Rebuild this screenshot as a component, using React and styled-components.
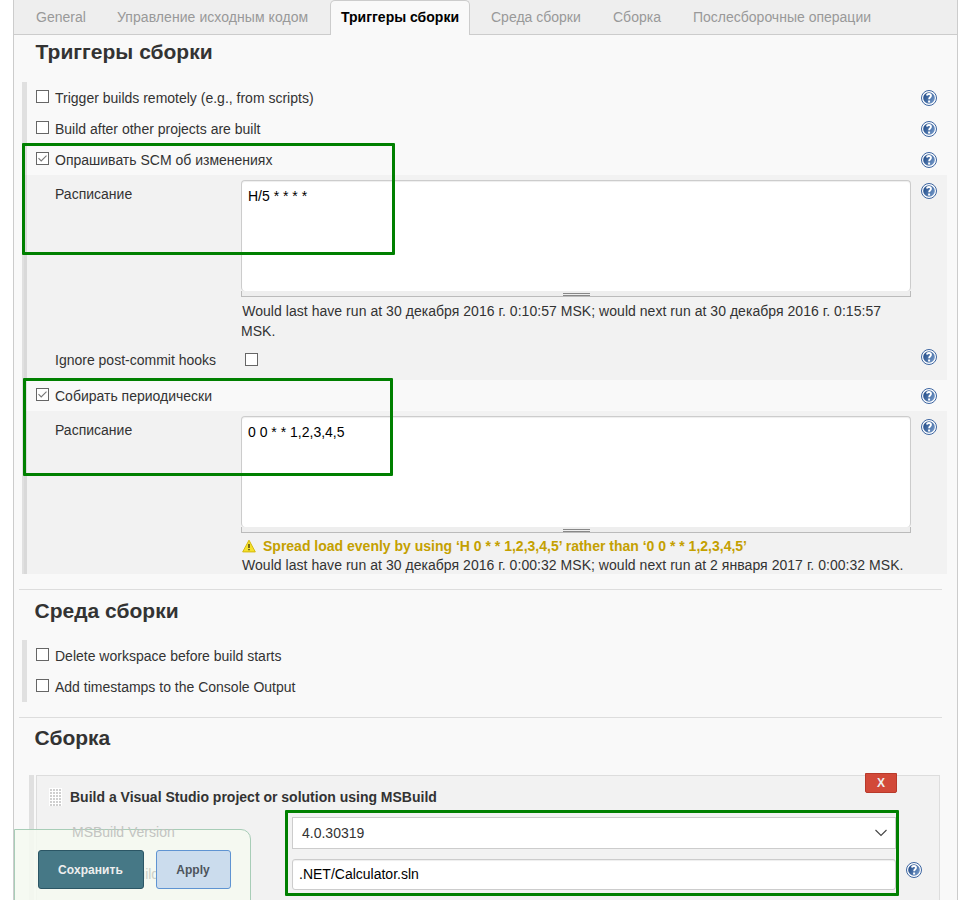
import React from "react";
import styled, { createGlobalStyle } from "styled-components";

const GlobalStyle = createGlobalStyle`
  * { box-sizing: border-box; }
  body {
    margin: 0;
    background: #fff;
    color: #333;
    font: 14px/20px "Liberation Sans", Arial, sans-serif;
    overflow: hidden;
  }
`;

const Page = styled.div`
  position: relative;
  width: 975px;
  height: 900px;
  overflow: hidden;
`;

const Panel = styled.main`
  width: 945px;
  height: 900px;
  margin-left: 13px;
  border: solid #ccc;
  border-width: 0 1px;
  background: #f9f9f9;
`;

const TabBar = styled.nav`
  display: flex;
  height: 35px;
  padding-left: 22px;
  background: #eee;
  border-bottom: 1px solid #ccc;
`;

const Tab = styled.a`
  flex: none;
  width: ${(p) => p.$width}px;
  margin-left: ${(p) => p.$gap || 0}px;
  line-height: 35px;
  color: #999;
  white-space: nowrap;
  letter-spacing: ${(p) => p.$spacing || 0}px;
`;

const ActiveTab = styled(Tab)`
  height: 35px;
  border: 1px solid #ccc;
  border-bottom: 0;
  border-radius: 5px 5px 0 0;
  background: #f9f9f9;
  color: #000;
  font-weight: bold;
  line-height: 33px;
  text-align: center;
`;

const Heading = styled.h2`
  margin: 0;
  height: ${(p) => p.$height}px;
  padding: ${(p) => p.$top}px 0 0 ${(p) => p.$left || 20.6}px;
  font-size: 21px;
  line-height: 24px;
  font-weight: bold;
  color: #333;
`;

const Group = styled.section`
  width: 925px;
  margin-left: 8px;
  border-left: 5px solid #e0e0e0;
`;

const OptionRow = styled.div`
  display: grid;
  grid-template-columns: 19px 1fr 26px;
  height: 31px;
  padding: 6px 0 0 9px;
`;

const Box = styled.span`
  display: block;
  width: 13px;
  height: 13px;
  margin: ${(p) => p.$margin || "2px 0 0"};
  border: 1px solid #666;
  background: #fff;
  svg { display: block; }
`;

const Label = styled.span`
  white-space: nowrap;
  line-height: 20px;
`;

const Details = styled.div`
  display: grid;
  grid-template-columns: 191px 670px 36px;
  grid-auto-rows: min-content;
  height: ${(p) => p.$height}px;
  margin-left: -3px;
  padding: 5px 0 0 23px;
  border-left: 3px solid #d9d9d9;
  background: #f2f2f2;
`;

const DetailLabel = styled(Label)`
  padding: ${(p) => p.$top || 4}px 0 0 5px;
`;

const HelpCell = styled.span`
  padding: ${(p) => p.$top || 0}px 0 0 ${(p) => p.$left || 0}px;
  svg { display: block; }
`;

const TextArea = styled.div`
  height: 111px;
  padding: 5px 6px;
  border: 1px solid #ccc;
  border-bottom: 0;
  border-radius: 4px;
  background: #fff;
  color: #000;
  box-shadow: inset 0 1px 1px rgba(0, 0, 0, 0.07);
`;

const Grip = styled.div`
  display: flex;
  justify-content: center;
  height: 6px;
  padding-top: 2px;
  border: 1px solid #bbb;
  border-top: 0;
  background: #eee;
`;

const GripLines = styled.span`
  width: 27px;
  height: 3px;
  border: solid #888;
  border-width: 1px 0;
`;

const Message = styled.div`
  margin-top: ${(p) => p.$top}px;
  padding-left: ${(p) => p.$left || 0}px;
  letter-spacing: 0.041px;
  line-height: 20px;
`;

const Warning = styled.div`
  display: flex;
  gap: 7px;
  height: 19px;
  margin-top: 3px;
  padding-left: 1px;
  color: #c4a000;
  font-weight: bold;
  white-space: nowrap;
  svg { flex: none; margin-top: 3px; }
`;

const Separator = styled.div`
  width: 923px;
  height: 1px;
  margin: ${(p) => p.$top}px 0 0 5px;
  background: #ddd;
`;

const BuildGroup = styled.section`
  width: 911px;
  margin-left: 15px;
  padding-left: 2px;
  border-left: 5px solid #e0e0e0;
`;

const BuildStep = styled.div`
  position: relative;
  height: 125px;
  border: 1px solid #ddd;
  border-bottom: 0;
  background: #f2f2f2;
`;

const StepTitle = styled.div`
  display: flex;
  gap: 8px;
  height: 41px;
  padding: 11px 0 0 12px;
  font-weight: bold;
  svg { margin-top: 1px; }
`;

const Field = styled.div`
  display: grid;
  grid-template-columns: 220px 604px 26px;
  height: 42px;
  padding-left: 35px;
`;

const FadedLabel = styled(Label)`
  position: relative;
  z-index: 2;
  padding-top: 5px;
  color: ${(p) => p.$color};
`;

const Select = styled.div`
  display: flex;
  justify-content: space-between;
  height: 32px;
  padding: 5px 8px 0 9px;
  border: 1px solid #ccc;
  background: #fff;
  svg { margin-top: 6px; }
`;

const Input = styled.div`
  height: 31px;
  padding: 4px 6px;
  border: 1px solid #ccc;
  border-radius: 3px;
  background: #fff;
  color: #000;
  box-shadow: inset 0 1px 1px rgba(0, 0, 0, 0.07);
`;

const DeleteButton = styled.button`
  position: absolute;
  top: -3px;
  right: 42px;
  width: 32px;
  height: 20px;
  padding: 1px 0 0;
  border: 1px solid #b83a2b;
  border-radius: 0 0 2px 2px;
  background: #d24939;
  color: #eee;
  font: bold 12px/17px "Liberation Sans", Arial, sans-serif;
`;

const Footer = styled.div`
  position: absolute;
  z-index: 1;
  left: 14px;
  top: 829px;
  width: 237px;
  height: 72px;
  border: 1px solid #a8cdb7;
  border-radius: 0 10px 0 0;
  background: rgba(245, 249, 240, 0.88);
`;

const FooterButtons = styled.div`
  position: absolute;
  z-index: 3;
  left: 38px;
  top: 850px;
  display: flex;
  gap: 12px;
`;

const Button = styled.button`
  width: ${(p) => p.$width}px;
  height: 39px;
  padding: 1px 1px 0 0;
  border: 1px solid ${(p) => (p.$primary ? "#2b5665" : "#5f94d2")};
  border-radius: 3px;
  background: ${(p) => (p.$primary ? "#467886" : "#cbdced")};
  color: ${(p) => (p.$primary ? "#eee" : "#4d545c")};
  font: bold 12px/36px "Liberation Sans", Arial, sans-serif;
  letter-spacing: 0.06px;
`;

const Highlight = styled.div`
  position: absolute;
  left: ${(p) => p.$x}px;
  top: ${(p) => p.$y}px;
  width: ${(p) => p.$w}px;
  height: ${(p) => p.$h}px;
  border: 3px solid #008000;
  border-radius: 1px;
`;

function Checkbox({ checked, margin }) {
  return (
    <Box $margin={margin}>
      {checked && (
        <svg width="11" height="11" viewBox="0 0 11 11">
          <path d="M1.5 5.2L4.2 7.9L9.5 2.6" fill="none" stroke="#777" strokeWidth="1.1" />
        </svg>
      )}
    </Box>
  );
}

function Help() {
  return (
    <svg width="16" height="16" viewBox="0 0 16 16">
      <defs>
        <linearGradient id="helpFill" x1="0" y1="0.2" x2="1" y2="0.8">
          <stop offset="0" stopColor="#204a87" />
          <stop offset="1" stopColor="#7499c9" />
        </linearGradient>
      </defs>
      <circle cx="8" cy="8" r="7.5" fill="#fff" stroke="#3b64a0" strokeWidth="1" />
      <circle cx="8" cy="8" r="5.8" fill="url(#helpFill)" />
      <path d="M5.8 5.5C6.1 3.5 10 3.4 10 5.7C10 7.3 8.1 7.3 8.1 9.3" fill="none" stroke="#fff" strokeWidth="1.8" />
      <rect x="7.1" y="10.5" width="2" height="2" fill="#fff" />
    </svg>
  );
}

function WarningIcon() {
  return (
    <svg width="14" height="14" viewBox="0 0 14 14">
      <path d="M7 1.2L13.3 12.9H0.7Z" fill="#f5e12c" stroke="#d5b90c" strokeWidth="1" strokeLinejoin="round" />
      <path d="M7 5V9M7 10V11.3" stroke="#584d12" strokeWidth="1.6" />
    </svg>
  );
}

function DragHandle() {
  return (
    <svg width="13" height="18" viewBox="0 0 13 18">
      <defs>
        <pattern id="handleDots" width="3" height="3" patternUnits="userSpaceOnUse">
          <rect width="3" height="3" fill="#fff" />
          <rect x="1" y="1" width="2" height="2" fill="#cfcfcf" />
        </pattern>
      </defs>
      <rect width="13" height="18" fill="url(#handleDots)" />
    </svg>
  );
}

function Option({ checked, help, children }) {
  return (
    <OptionRow>
      <Checkbox checked={checked} />
      <Label>{children}</Label>
      {help && <HelpCell $top={2}><Help /></HelpCell>}
    </OptionRow>
  );
}

function Schedule({ value, children }) {
  return (
    <div>
      <TextArea>{value}</TextArea>
      <Grip><GripLines /></Grip>
      {children}
    </div>
  );
}

export default function App() {
  return (
    <Page>
      <GlobalStyle />
      <Panel>
        <TabBar>
          <Tab $width={50}>General</Tab>
          <Tab $width={192} $gap={31} $spacing={0.06}>Управление исходным кодом</Tab>
          <ActiveTab as="a" $width={140} $gap={21}>Триггеры сборки</ActiveTab>
          <Tab $width={90} $gap={21}>Среда сборки</Tab>
          <Tab $width={48} $gap={32}>Сборка</Tab>
          <Tab $width={180} $gap={32}>Послесборочные операции</Tab>
        </TabBar>

        <Heading $height={47} $top={5} $left={21.6}>Триггеры сборки</Heading>
        <Group>
          <Option help>Trigger builds remotely (e.g., from scripts)</Option>
          <Option help>Build after other projects are built</Option>
          <Option checked help>Опрашивать SCM об изменениях</Option>
          <Details $height={205}>
            <DetailLabel>Расписание</DetailLabel>
            <Schedule value="H/5 * * * *">
              <Message $top={4}>
                <span>&#8202;Would last have run at 30 декабря 2016 г. 0:10:57 MSK; would next run at 30 декабря 2016 г. 0:15:57</span>
                <br />
                MSK.
              </Message>
            </Schedule>
            <HelpCell $top={3} $left={10}><Help /></HelpCell>
            <DetailLabel $top={9}>Ignore post-commit hooks</DetailLabel>
            <Checkbox margin="12px 0 0 4px" />
            <HelpCell $top={8} $left={10}><Help /></HelpCell>
          </Details>
          <Option checked help>Собирать периодически</Option>
          <Details $height={163}>
            <DetailLabel>Расписание</DetailLabel>
            <Schedule value="0 0 * * 1,2,3,4,5">
              <Warning>
                <WarningIcon />
                <span>Spread load evenly by using ‘H 0 * * 1,2,3,4,5’ rather than ‘0 0 * * 1,2,3,4,5’</span>
              </Warning>
              <Message $top={0} $left={1}>
                Would last have run at 30 декабря 2016 г. 0:00:32 MSK; would next run at 2 января 2017 г. 0:00:32 MSK.
              </Message>
            </Schedule>
            <HelpCell $top={3} $left={10}><Help /></HelpCell>
          </Details>
        </Group>

        <Separator $top={15} />
        <Heading $height={50} $top={9}>Среда сборки</Heading>
        <Group>
          <Option>Delete workspace before build starts</Option>
          <Option>Add timestamps to the Console Output</Option>
        </Group>

        <Separator $top={15} />
        <Heading $height={57} $top={8}>Сборка</Heading>
        <BuildGroup>
          <BuildStep>
            <StepTitle>
              <DragHandle />
              <span>Build a Visual Studio project or solution using MSBuild</span>
            </StepTitle>
            <DeleteButton>X</DeleteButton>
            <Field>
              <FadedLabel $color="#c3c4c1">MSBuild Version</FadedLabel>
              <Select>
                4.0.30319
                <svg width="12" height="8" viewBox="0 0 12 8">
                  <path d="M0.5 1L6 6.5L11.5 1" fill="none" stroke="#444" strokeWidth="1.1" />
                </svg>
              </Select>
            </Field>
            <Field>
              <FadedLabel $color="#ccd0c8">MSBuild Build File</FadedLabel>
              <Input>.NET/Calculator.sln</Input>
              <HelpCell $top={3} $left={10}><Help /></HelpCell>
            </Field>
          </BuildStep>
        </BuildGroup>
      </Panel>

      <Footer />
      <FooterButtons>
        <Button $primary $width={106}>Сохранить</Button>
        <Button $width={75}>Apply</Button>
      </FooterButtons>

      <Highlight $x={22} $y={143} $w={373} $h={112} />
      <Highlight $x={23} $y={378} $w={370} $h={98} />
      <Highlight $x={285} $y={810} $w={614} $h={86} />
    </Page>
  );
}
